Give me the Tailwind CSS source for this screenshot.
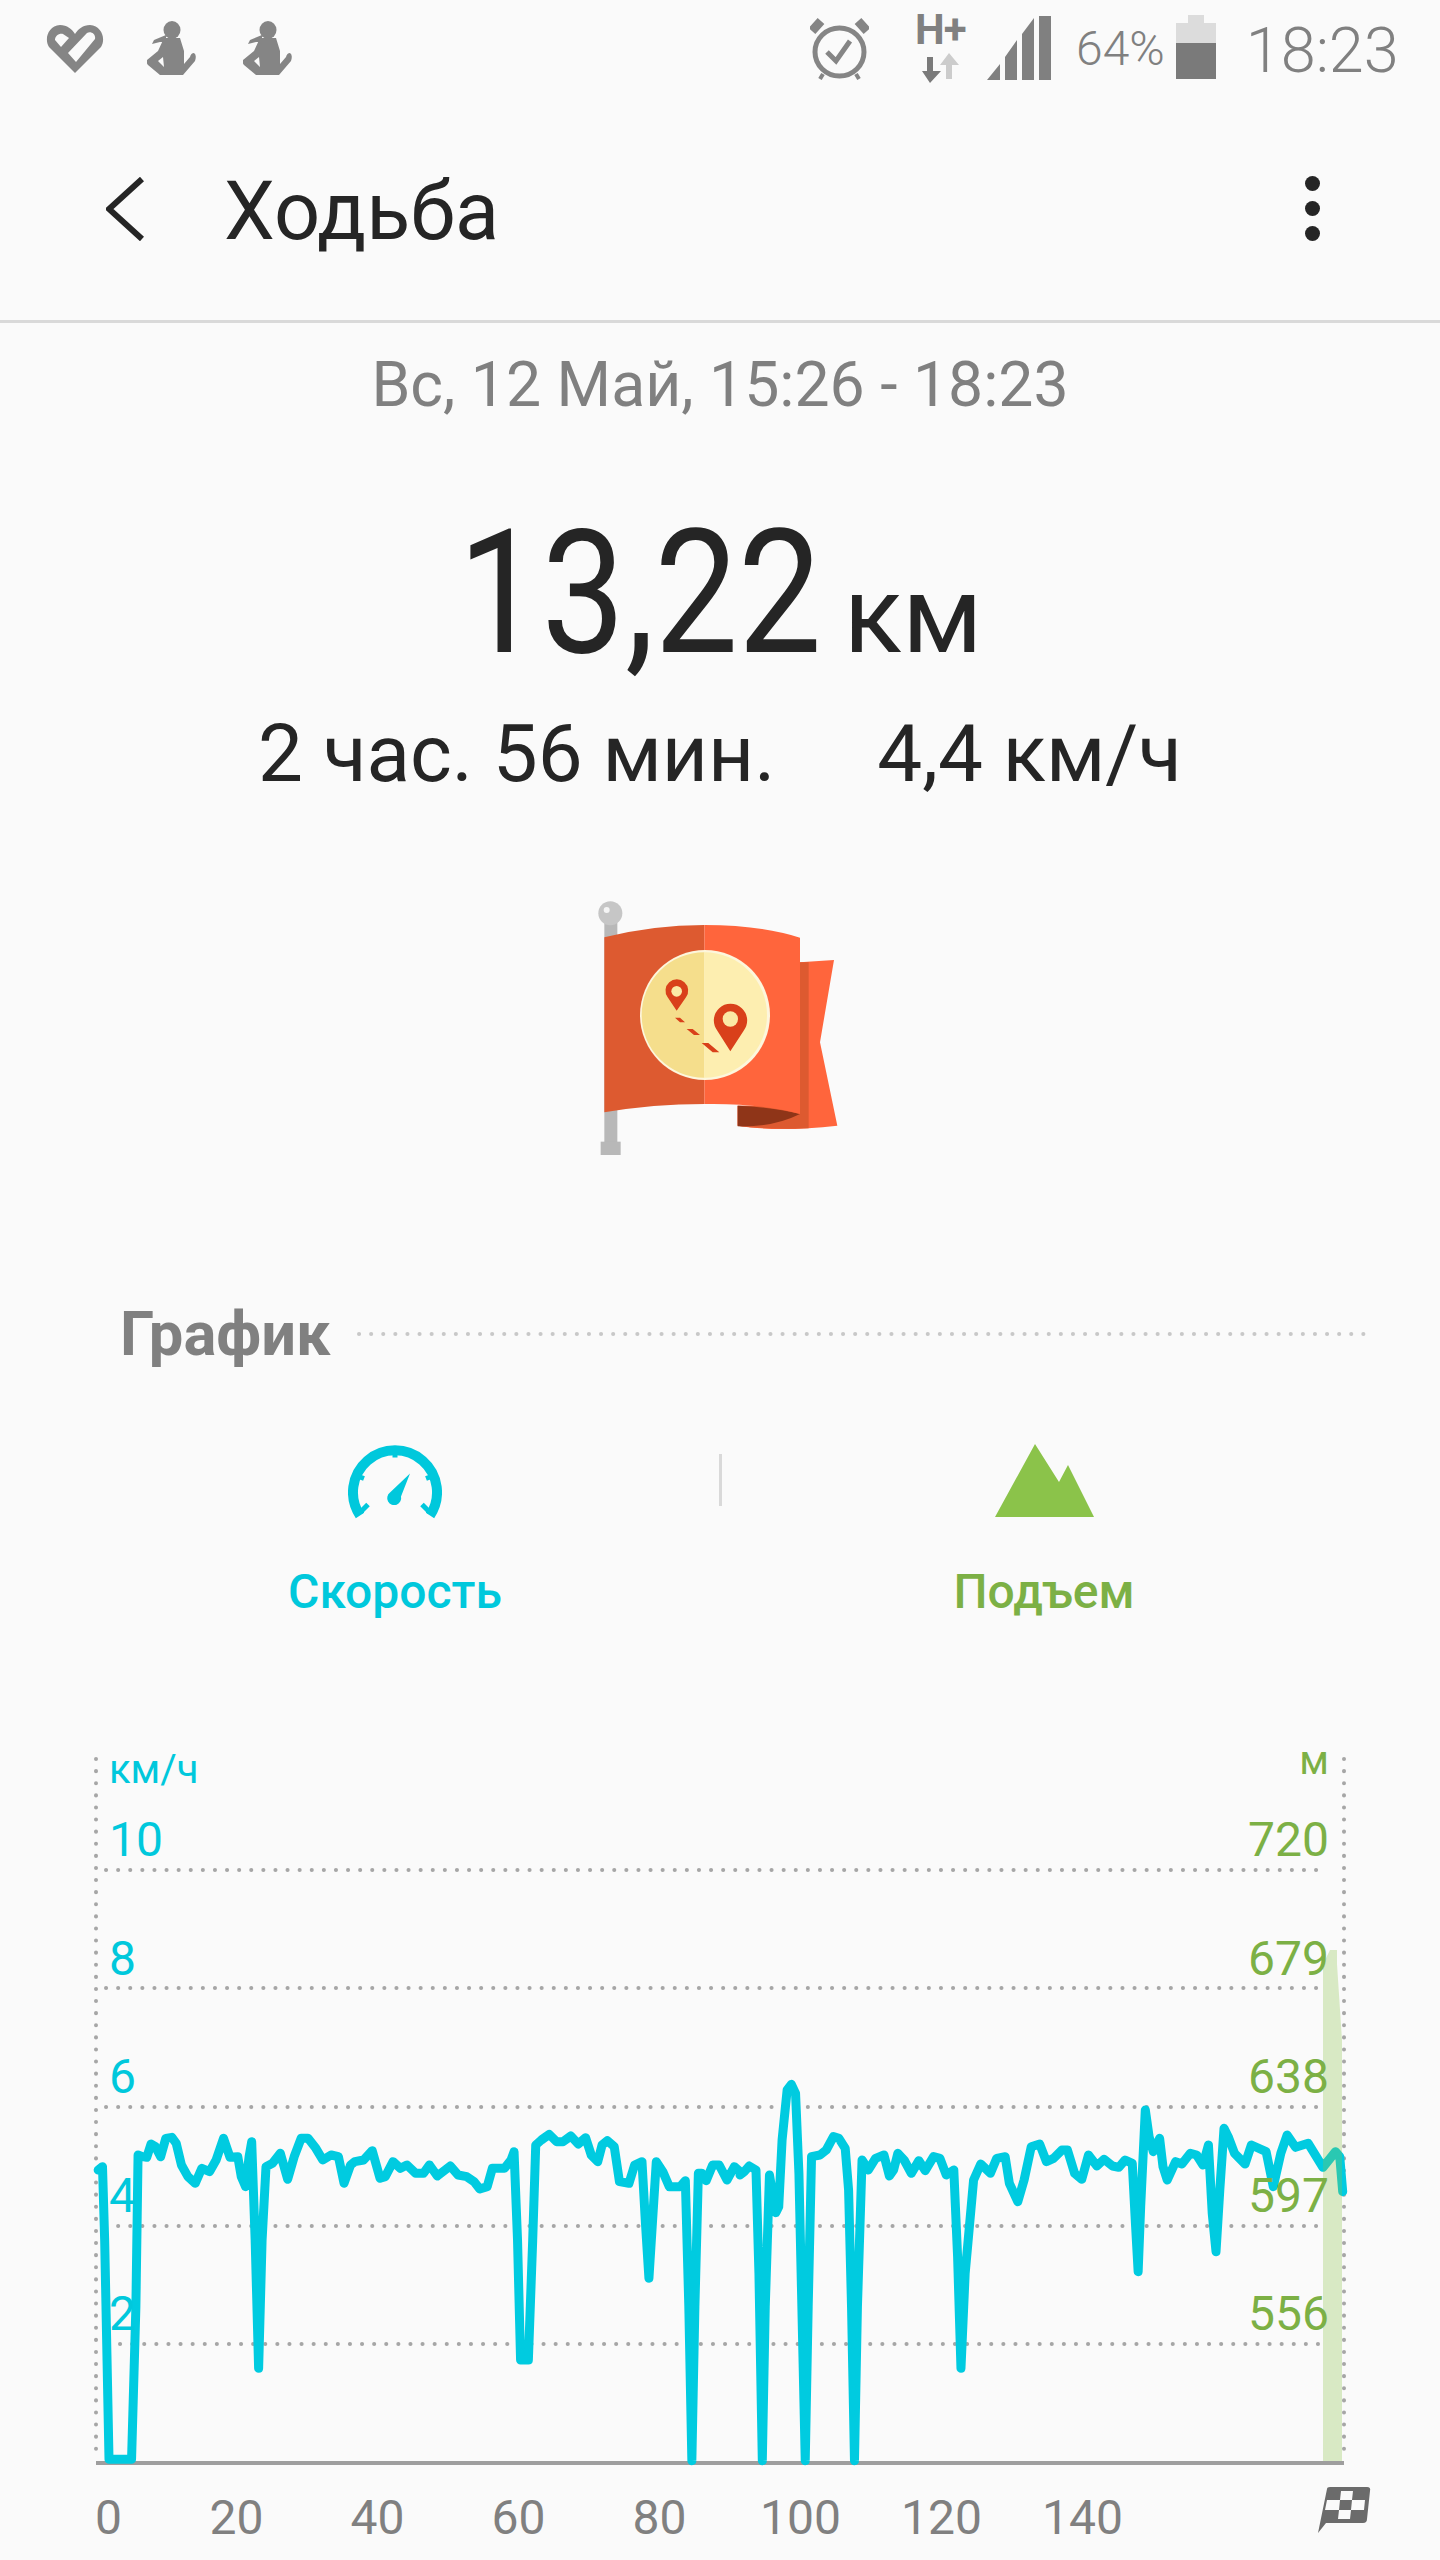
<!DOCTYPE html>
<html lang="ru">

<head>
    <meta charset="UTF-8">
    <meta name="viewport" content="width=device-width, initial-scale=1.0">
    <title>Ходьба</title>
    <script src="https://cdn.jsdelivr.net/npm/@tailwindcss/browser@4"></script>
</head>

<body class="bg-[#fafafa] font-['Roboto',sans-serif]">
    <div class="w-[1440px] h-[2560px] overflow-hidden">
        <!-- status bar -->
        <div class="flex items-start h-[97px] pl-[46px] text-[#808080]">
            <svg class="mt-[25px] w-[58px] h-[48px]" viewBox="0 0 58 48" fill="#858585">
                <path fill-rule="evenodd" d="M29 48 3 22C-2 14 2 1 14 0 21 0 26 4 29 9 32 4 37 0 44 0 56 1 60 14 55 22ZM9 15 15 22 23 13 17 9C13 8 9 11 9 15ZM22 28 30 37 49 14C50 9 45 6 41 8Z" />
            </svg>
            <svg class="ml-[43px] mt-[21px] w-[49px] h-[54px]" viewBox="0 0 49 54" fill="#858585">
                <ellipse cx="25" cy="9" rx="8.500" ry="9" />
                <path d="M19 14 7 19 5 23 13 21 19 21Z" />
                <path fill-rule="evenodd" d="M17 17 11 30 0 39Q-1 42 1 44L13 54H36L48 40Q50 34 47 32 44 32 43 36L37 43 37 30 33 17ZM11 40 16 36 17 46Z" />
            </svg>
            <svg class="ml-[47px] mt-[21px] w-[49px] h-[54px]" viewBox="0 0 49 54" fill="#858585">
                <ellipse cx="25" cy="9" rx="8.500" ry="9" />
                <path d="M19 14 7 19 5 23 13 21 19 21Z" />
                <path fill-rule="evenodd" d="M17 17 11 30 0 39Q-1 42 1 44L13 54H36L48 40Q50 34 47 32 44 32 43 36L37 43 37 30 33 17ZM11 40 16 36 17 46Z" />
            </svg>
            <svg class="ml-[518px] mt-[17px] w-[59px] h-[63px]" viewBox="0 0 59 63" fill="none" stroke="#858585">
                <ellipse cx="29.500" cy="35" rx="24.500" ry="24" stroke-width="5" />
                <path d="M17 35 26 44 40 24" stroke-width="5" />
                <path d="M2 14 11 4M57 14 48 4" stroke-width="9" />
                <path d="M13 57 10 62M46 57 49 62" stroke-width="4" />
            </svg>
            <div class="ml-[46px] mt-[15px] w-[48px] h-[68px] relative">
                <span class="block text-[42px] leading-[30px] font-bold tracking-[-1px]">H+</span>
                <svg class="absolute left-0 top-[36px] w-[48px] h-[32px]" viewBox="0 0 48 32">
                    <path d="M12 6H18V20H26L15 32 7 20H12Z" fill="#7a7a7a" />
                    <path d="M31 28H37V14H44L34 2 25 14H31Z" fill="#cccccc" />
                </svg>
            </div>
            <svg class="ml-[24px] mt-[16px] w-[64px] h-[64px]" viewBox="0 0 64 64" fill="#808080">
                <path d="M0 64 13 48V64ZM18 64V41L30 24V64ZM35 64V18L47 2V64ZM52 64V0H64V64Z" />
            </svg>
            <span class="ml-[25px] mt-[24px] text-[48px] leading-[50px] font-light">64%</span>
            <svg class="ml-[11px] mt-[15px] w-[40px] h-[64px]" viewBox="0 0 40 64">
                <path d="M12 0H28V8H40V28H0V8H12Z" fill="#dcdcdc" />
                <rect y="28" width="40" height="36" fill="#7a7a7a" />
            </svg>
            <span class="ml-[30px] mt-[13px] text-[63px] leading-[76px] font-light">18:23</span>
        </div>

        <!-- toolbar -->
        <div class="flex items-center h-[223px] border-b-[3px] border-[#d9d9d9] box-content">
            <svg class="ml-[106px] w-[38px] h-[64px]" viewBox="0 0 38 64" fill="none" stroke="#252525" stroke-width="6">
                <path d="M36 2 3 32 36 62" />
            </svg>
            <h1 class="ml-[80px] mt-[5px] text-[81px] leading-none text-[#252525]">Ходьба</h1>
            <div class="ml-auto mr-[120px] flex flex-col gap-[10px]">
                <span class="block w-[15px] h-[15px] rounded-full bg-[#252525]"></span>
                <span class="block w-[15px] h-[15px] rounded-full bg-[#252525]"></span>
                <span class="block w-[15px] h-[15px] rounded-full bg-[#252525]"></span>
            </div>
        </div>

        <!-- summary -->
        <p class="mt-[27px] text-center text-[62.500px] leading-[70px] text-[#808080]">Вс, 12 Май, 15:26 - 18:23</p>
        <div class="mt-[88px] flex items-baseline justify-center text-[#252525] h-[170px]">
            <span class="inline-block w-[354px] whitespace-nowrap origin-left scale-x-[.865] text-[172px] leading-[170px]">13,22</span>
            <span class="ml-[32px] text-[108px] leading-[100px]">км</span>
        </div>
        <div class="mt-[31px] flex justify-center gap-[102px] text-[#252525] text-[80px] leading-[90px]">
            <span>2 час. 56 мин.</span>
            <span>4,4 км/ч</span>
        </div>

        <svg class="mt-[80px] ml-[560px] w-[320px] h-[300px]" viewBox="0 0 960 900">
            <rect x="133" y="130" width="39" height="670" fill="#b8b8b8" />
            <rect x="122" y="788" width="60" height="40" fill="#b8b8b8" />
            <circle cx="151" cy="103" r="36" fill="#c6c6c6" />
            <circle cx="140" cy="93" r="9" fill="#f5f5f5" />
            <path d="M720 250 822 243 780 490 832 740 Q650 760 533 740V680H720Z" fill="#ff653c" />
            <path d="M720 250H746V748Q620 752 533 740V680H720Z" fill="#dd5a30" />
            <path d="M533 680Q640 685 720 705 640 745 533 742Z" fill="#8f3518" />
            <path d="M133 175Q280 138 433 138V675Q280 675 133 700Z" fill="#dd5a30" />
            <path d="M433 138Q600 138 720 176V705Q600 672 433 675Z" fill="#ff653c" />
            <circle cx="435" cy="408" r="195" fill="#fdf6dc" />
            <path d="M433 220A188 188 0 0 0 433 596Z" fill="#f5de8c" />
            <path d="M433 220A188 188 0 0 1 433 596Z" fill="#fdeeb0" />
            <path d="M350 395 323 355A34 34 0 1 1 378 355Z" fill="#d9401a" />
            <circle cx="350" cy="337" r="16" fill="#fbe9a5" />
            <path d="M511 517 472 455A50 50 0 1 1 551 455Z" fill="#d9401a" />
            <circle cx="511" cy="420" r="23" fill="#fbe9a5" />
            <path d="M345 416H360L375 430H360ZM380 450H398L420 468H402ZM425 492H445L478 520H458Z" fill="#d9401a" />
        </svg>

        <!-- chart section title -->
        <div class="mt-[120px] flex items-center pl-[120px] pr-[72px]">
            <h2 class="text-[61.500px] leading-[70px] font-bold text-[#808080]">График</h2>
            <svg class="ml-[26px] flex-1 h-[4px]" fill="none">
                <path d="M2 2H1012" stroke="#c8c8c8" stroke-width="4" stroke-linecap="round" stroke-dasharray="0.1 12" />
            </svg>
        </div>

        <!-- chart toggles -->
        <div class="mt-[73px] flex items-start">
            <div class="w-[790px] flex flex-col items-center">
                <svg class="w-[94px] h-[77px]" viewBox="0 0 94 76" fill="none" stroke="#00c8dc">
                    <path d="M12 73A42 42 0 1 1 82 73" stroke-width="10" />
                    <path d="M47 4V15M8 33 16 36M86 33 78 36M12 70 20 62M82 70 74 62" stroke-width="5" />
                    <path d="M62 31 53 54A7 7 0 1 1 42 50Z" fill="#00c8dc" stroke="none" />
                </svg>
                <span class="mt-[46px] text-[48px] leading-[54px] font-medium text-[#00c8dc]">Скорость</span>
            </div>
            <div class="-ml-[71px] mt-[12px] w-[3px] h-[52px] bg-[#d9d9d9]"></div>
            <div class="w-[644px] flex flex-col items-center">
                <svg class="mt-[2px] w-[99px] h-[74px]" viewBox="0 0 99 74" fill="#8bc34a">
                    <path d="M0 73 40 0 64 38 73 21 99 73Z" />
                </svg>
                <span class="mt-[47px] text-[48px] leading-[54px] font-medium text-[#7cb045]">Подъем</span>
            </div>
        </div>

        <!-- chart -->
        <div class="relative mt-[121px] h-[820px]">
            <svg class="absolute inset-0 w-[1440px] h-[820px]" viewBox="0 1740 1440 820" fill="none">
                <g stroke="#a6a6a6" stroke-width="4" stroke-linecap="round" stroke-dasharray="0.1 12">
                    <path d="M96 1759V2455M1344 1759V2455" />
                    <path d="M106 1870H1322M106 1988H1322M106 2107H1322M106 2226H1322M120 2344H1322" />
                </g>
                <rect x="96" y="2461" width="1248" height="4" fill="#9e9e9e" />
                <g stroke="#00cbe0" stroke-width="9" stroke-linejoin="round" stroke-linecap="round">
                    <polyline vector-effect="non-scaling-stroke" transform="matrix(0.43367 0 0 0.33333 60 2040)" points="88,390 98,380 103,600 113,1258 165,1258 175,800 180,345 190,350 200,352 210,312 220,320 232,350 244,295 258,292 268,310 280,375 295,410 312,430 327,385 345,395 360,360 377,295 392,352 410,350 418,410 428,440 436,350 442,305 450,600 458,985 466,600 475,380 490,370 508,340 525,418 540,350 556,295 572,295 590,325 606,360 625,345 642,350 655,430 670,375 680,365 700,360 720,332 738,415 750,410 768,365 785,385 800,375 820,400 838,400 852,375 870,408 900,378 918,405 938,410 955,425 968,447 985,440 997,385 1025,385 1040,360 1047,335 1055,600 1062,960 1080,960 1090,600 1097,315 1110,300 1128,283 1145,305 1160,305 1178,288 1195,312 1212,293 1225,345 1240,365 1250,315 1262,302 1278,320 1290,425 1312,430 1325,375 1342,365 1350,550 1358,715 1366,550 1375,365 1390,395 1405,440 1430,440 1442,422 1450,800 1457,1262 1464,800 1472,400 1480,400 1490,422 1505,375 1520,375 1538,420 1555,380 1568,395" />
                    <polyline vector-effect="non-scaling-stroke" transform="matrix(0.42088 0 0 0.33333 740 2040)" points="0,405 10,395 22,378 38,390 45,700 53,1262 60,800 70,405 85,518 92,500 100,300 112,150 122,133 132,160 140,400 147,800 155,1262 162,800 170,350 190,345 205,330 222,290 235,295 250,325 258,450 265,800 272,1262 279,800 290,360 305,390 322,355 342,345 355,408 365,390 375,340 390,360 407,400 425,362 440,392 460,350 475,355 490,405 508,390 517,650 525,985 535,700 555,420 572,372 595,400 610,355 630,350 640,430 660,485 675,420 692,320 712,312 728,365 745,355 765,330 778,330 795,400 812,418 828,345 848,378 865,358 885,378 900,382 915,360 932,370 940,560 946,695 952,500 963,210 972,290 982,335 997,295 1005,380 1015,420 1035,365 1050,372 1070,340 1085,345 1100,375 1113,315 1122,520 1131,635 1140,450 1150,265 1160,290 1175,340 1200,372 1215,315 1250,335 1267,440 1285,340 1300,285 1320,322 1350,310 1385,382 1415,335 1425,350 1432,455" />
                </g>
                <path d="M1323 2461V1964L1330 1950H1337V1964L1342 2040V2461Z" fill="#8bc34a" fill-opacity="0.3" />
            </svg>

            <div class="absolute inset-0 pt-[8px] pl-[109px] pr-[111px]">
                <div class="flex justify-between items-start h-[51px]">
                    <span class="text-[40px] leading-[44px] text-[#00c8dc]">км/ч</span>
                    <span class="-mt-[3px] text-[40px] leading-[32px] text-[#7cb045]">м</span>
                </div>
                <div class="flex justify-between items-end h-[71px] pb-[6px] text-[48px] leading-[48px]"><span class="text-[#00c8dc]">10</span><span class="text-[#7cb045]">720</span></div>
                <div class="flex justify-between items-end h-[118.500px] pb-[6px] text-[48px] leading-[48px]"><span class="text-[#00c8dc]">8</span><span class="text-[#7cb045]">679</span></div>
                <div class="flex justify-between items-end h-[118.500px] pb-[6px] text-[48px] leading-[48px]"><span class="text-[#00c8dc]">6</span><span class="text-[#7cb045]">638</span></div>
                <div class="flex justify-between items-end h-[118.500px] pb-[6px] text-[48px] leading-[48px]"><span class="text-[#00c8dc]">4</span><span class="text-[#7cb045]">597</span></div>
                <div class="flex justify-between items-end h-[118.500px] pb-[6px] text-[48px] leading-[48px]"><span class="text-[#00c8dc]">2</span><span class="text-[#7cb045]">556</span></div>

                <div class="-ml-[14px] -mr-[60px] mt-[150px] flex items-start text-[48px] leading-[48px] text-[#808080]">
                    <span class="w-[71px] shrink-0">0</span>
                    <span class="w-[141px] shrink-0 text-center">20</span>
                    <span class="w-[141px] shrink-0 text-center">40</span>
                    <span class="w-[141px] shrink-0 text-center">60</span>
                    <span class="w-[141px] shrink-0 text-center">80</span>
                    <span class="w-[141px] shrink-0 text-center">100</span>
                    <span class="w-[141px] shrink-0 text-center">120</span>
                    <span class="w-[141px] shrink-0 text-center">140</span>
                    <svg class="ml-[164px] -mt-[8px] w-[54px] h-[47px] shrink-0" viewBox="0 0 54 47">
                        <path d="M10 3Q10 1 13 1H50Q54 1 53 5L50 33Q50 37 46 37H9L1 47Z" fill="#6b6b6b" />
                        <path d="M24 5H36L35 14H23ZM10 14H23L22 24H8ZM35 14H48L47 24H34ZM22 24H34L33 33H21Z" fill="#fafafa" />
                    </svg>
                </div>
            </div>
        </div>
    </div>
</body>

</html>
